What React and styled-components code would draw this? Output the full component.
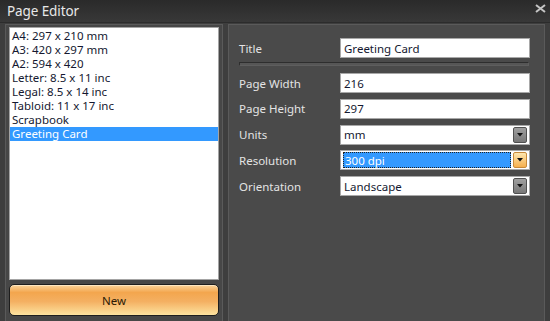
import styled, { createGlobalStyle } from "styled-components"

const GlobalStyle = createGlobalStyle`
    html, body {
        margin: 0;
        padding: 0;
        background: #3c3c3c;
        overflow: hidden;
    }
`

const pages = [
    "A4: 297 x 210 mm",
    "A3: 420 x 297 mm",
    "A2: 594 x 420",
    "Letter: 8.5 x 11 inc",
    "Legal: 8.5 x 14 inc",
    "Tabloid: 11 x 17 inc",
    "Scrapbook",
    "Greeting Card",
]

const DropArrow = () => (
    <svg width="6" height="4" viewBox="0 0 6 4">
        <path d="M0 0 H6 L3 3.5 Z" fill="#111" />
    </svg>
)

const App = () => {
    return (
        <>
            <GlobalStyle />
            <Window>
                <TitleBar>
                    <TitleText>Page Editor</TitleText>
                    <CloseButton>
                        <svg width="11" height="9" viewBox="0 0 11 9">
                            <path d="M1 1 L10 8 M10 1 L1 8" stroke="#c4c4c4" strokeWidth="2" />
                        </svg>
                    </CloseButton>
                </TitleBar>

                <Body>
                    <LeftPanel>
                        <PageList>
                            {pages.map((item) => (
                                <PageItem key={item} selected={item === "Greeting Card"}>{item}</PageItem>
                            ))}
                        </PageList>
                        <NewButton>New</NewButton>
                    </LeftPanel>

                    <RightPanel>
                        <FormRow>
                            <Label>Title</Label>
                            <Field>Greeting Card</Field>
                        </FormRow>
                        <Groove />
                        <Rows>
                            <FormRow>
                                <Label>Page Width</Label>
                                <Field>216</Field>
                            </FormRow>
                            <FormRow>
                                <Label>Page Height</Label>
                                <Field>297</Field>
                            </FormRow>
                            <FormRow>
                                <Label>Units</Label>
                                <Field>
                                    <FieldText>mm</FieldText>
                                    <DropButton><DropArrow /></DropButton>
                                </Field>
                            </FormRow>
                            <FormRow>
                                <Label>Resolution</Label>
                                <Field focused>
                                    <Highlight>300 dpi</Highlight>
                                    <DropButton active><DropArrow /></DropButton>
                                </Field>
                            </FormRow>
                            <FormRow>
                                <Label>Orientation</Label>
                                <Field>
                                    <FieldText>Landscape</FieldText>
                                    <DropButton><DropArrow /></DropButton>
                                </Field>
                            </FormRow>
                        </Rows>
                    </RightPanel>
                </Body>
            </Window>
        </>
    )
}

export default App

const Window = styled.div`
    width: 550px;
    height: 321px;
    display: flex;
    flex-direction: column;

    background: #3e3e3e;
    font-family: "Noto Sans", "DejaVu Sans", sans-serif;
`

const TitleBar = styled.div`
    height: 22px;
    padding: 0 4px 0 7px;
    display: flex;
    align-items: center;
    justify-content: space-between;

    background: linear-gradient(#2a2a2a, #383838);
    border-bottom: 1px solid #2c2c2c;
`

const TitleText = styled.div`
    color: #e8e8e8;
    font-size: 13.5px;
    letter-spacing: -0.1px;
`

const CloseButton = styled.div`
    display: flex;
    margin-top: -5px;
`

const Body = styled.div`
    flex: 1;
    min-height: 0;
    padding: 1px 5px 0 5px;
    display: flex;
    gap: 5px;
`

const LeftPanel = styled.div`
    width: 212px;
    padding: 2px 3px 0 3px;
    display: flex;
    flex-direction: column;
    gap: 4px;

    background: #474747;
    border: 1px solid #5a5a5a;
    border-bottom: none;
`

const PageList = styled.div`
    height: 250px;
    padding-top: 1px;

    background: #fff;
    border: 1px solid #a4a4a4;
`

const PageItem = styled.div`
    height: 14px;
    padding-left: 2px;

    color: ${(p) => (p.selected ? "#fff" : "#141830")};
    background: ${(p) => (p.selected ? "#3399ff" : "transparent")};
    font-size: 11.5px;
    line-height: 14px;
    white-space: nowrap;
`

const NewButton = styled.div`
    height: 30px;
    display: flex;
    align-items: center;
    justify-content: center;

    background: linear-gradient(#fbd49a 0%, #f3a64e 25%, #f4b062 55%, #fde39f 100%);
    border: 1px solid #1e1e1e;
    border-radius: 5px;
    box-shadow: inset 0 1px 0 #ffe6c0;

    color: #2a1a05;
    font-size: 11.5px;
`

const RightPanel = styled.div`
    flex: 1;
    padding: 13px 14px 0 10px;
    display: flex;
    flex-direction: column;

    background: #4a4a4a;
    border: 1px solid #5a5a5a;
    border-bottom: none;
    margin-right: 0;
`

const Rows = styled.div`
    display: flex;
    flex-direction: column;
    gap: 5.75px;
`

const FormRow = styled.div`
    display: grid;
    grid-template-columns: 101px 190px;
    align-items: center;
    height: 20px;
`

const Label = styled.div`
    color: #e4e4e4;
    font-size: 11.5px;
`

const Field = styled.div`
    box-sizing: border-box;
    height: 20px;
    padding: ${(p) => (p.focused ? "1px 2px 1px 2px" : "0 2px 0 3px")};
    display: flex;
    align-items: center;
    gap: 2px;

    background: #fff;
    border: 1px solid #a8a8a8;

    color: #141830;
    font-size: 11.5px;
`

const FieldText = styled.div`
    flex: 1;
`

const Highlight = styled.div`
    flex: 1;
    height: 16px;
    box-sizing: border-box;
    padding-left: 1px;
    display: flex;
    align-items: center;

    background: #3399ff;
    border: 1px dotted #222;

    color: #fff;
`

const DropButton = styled.div`
    box-sizing: border-box;
    width: 14px;
    height: 16px;
    display: flex;
    align-items: center;
    justify-content: center;

    background: ${(p) => (p.active ? "linear-gradient(#fde6b0, #f6b04e)" : "linear-gradient(#a0a0a0, #787878)")};
    border: 1px solid ${(p) => (p.active ? "#c88a3a" : "#505050")};
    border-radius: 2px;
`

const Groove = styled.div`
    margin: 4px 0 7px 0;
    height: 4px;
    width: 290px;

    background: #565656;
    border: 1px solid #2e2e2e;
    border-bottom-color: #5e5e5e;
    border-right-color: #5e5e5e;
    box-sizing: border-box;
`
